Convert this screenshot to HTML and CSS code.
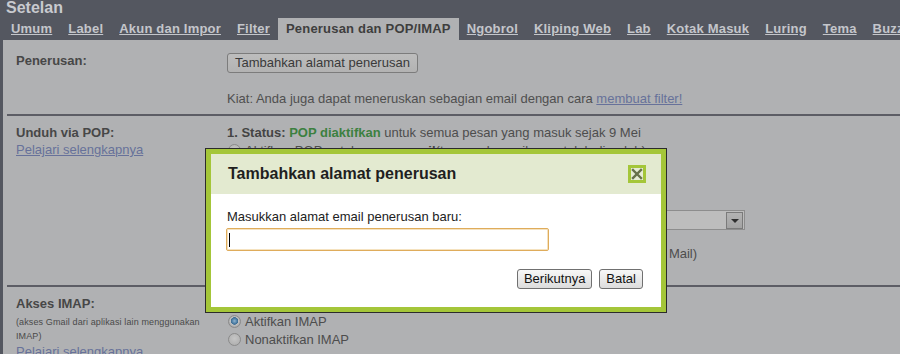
FILE: index.html
```html
<!DOCTYPE html>
<html lang="id">
<head>
<meta charset="utf-8">
<title>Setelan</title>
<link rel="stylesheet" href="styles.css">
</head>
<body>
<div class="page">
  <header class="top">
    <h1 class="title">Setelan</h1>
    <nav class="tabs">
      <a class="tab">Umum</a>
      <a class="tab">Label</a>
      <a class="tab">Akun dan Impor</a>
      <a class="tab">Filter</a>
      <span class="tab active">Penerusan dan POP/IMAP</span>
      <a class="tab">Ngobrol</a>
      <a class="tab">Kliping Web</a>
      <a class="tab">Lab</a>
      <a class="tab">Kotak Masuk</a>
      <a class="tab">Luring</a>
      <a class="tab">Tema</a>
      <a class="tab">Buzz</a>
    </nav>
  </header>

  <main class="panel">
    <section class="row fwd">
      <div class="lbl"><b>Penerusan:</b></div>
      <div class="val">
        <button class="btn-dim">Tambahkan alamat penerusan</button>
        <p class="tip">Kiat: Anda juga dapat meneruskan sebagian email dengan cara <a class="link">membuat filter!</a></p>
      </div>
    </section>

    <section class="row pop">
      <div class="lbl">
        <b class="lbl-title">Unduh via POP:</b>
        <a class="link lbl-link">Pelajari selengkapnya</a>
      </div>
      <div class="val">
        <div class="status"><b>1. Status:</b> <b class="ok">POP diaktifkan</b> untuk semua pesan yang masuk sejak 9 Mei</div>
        <div class="radio-line"><span class="radio"></span>Aktifkan POP untuk <b>semua email</b> (termasuk email yang telah diunduh)</div>
        <div class="radio-line"><span class="radio checked"></span>Aktifkan POP hanya untuk <b>email yang masuk mulai sekarang</b></div>
        <div class="radio-line"><span class="radio"></span>Nonaktifkan POP</div>
        <div class="select-line"><b>2. Saat pesan diakses dengan POP</b>
          <span class="select"><span class="select-text">simpan salinan Gmail</span><span class="arrow"></span></span>
        </div>
        <div class="step3"><b>3. Konfigurasikan klien email Anda</b> (mis. Outlook, Eudora, Netscape Mail)</div>
        <div class="plain"><a class="link">Petunjuk Konfigurasi</a></div>
      </div>
    </section>

    <section class="row imap">
      <div class="lbl">
        <b class="lbl-title">Akses IMAP:</b>
        <p class="small">(akses Gmail dari aplikasi lain menggunakan IMAP)</p>
        <a class="link lbl-link">Pelajari selengkapnya</a>
      </div>
      <div class="val">
        <div class="status"><b>1. Status:</b> <b class="ok">IMAP diaktifkan</b></div>
        <div class="radio-line"><span class="radio checked"></span>Aktifkan IMAP</div>
        <div class="radio-line"><span class="radio"></span>Nonaktifkan IMAP</div>
      </div>
    </section>
  </main>

  <div class="dialog" role="dialog">
    <div class="dialog-in">
      <div class="dlg-head">
        <span class="dlg-title">Tambahkan alamat penerusan</span>
        <span class="close">
          <svg width="12" height="12" viewBox="0 0 12 12"><path d="M2 2 L10 10 M10 2 L2 10" stroke="#67714a" stroke-width="2.4" stroke-linecap="square" fill="none"/></svg>
        </span>
      </div>
      <div class="dlg-body">
        <div class="dlg-label">Masukkan alamat email penerusan baru:</div>
        <div class="field"><span class="caret"></span></div>
        <div class="dlg-actions">
          <button class="btn">Berikutnya</button>
          <button class="btn">Batal</button>
        </div>
      </div>
    </div>
  </div>
</div>
</body>
</html>
```

FILE: styles.css
```css
* { box-sizing: border-box; }

html, body {
  margin: 0;
  padding: 0;
}

body {
  width: 900px;
  height: 354px;
  overflow: hidden;
  background: #545760;
  font-family: "Liberation Sans", Arial, sans-serif;
  font-size: 13px;
  color: #4d4d4d;
}

.page {
  position: relative;
  width: 900px;
  height: 354px;
}

/* header */
.top {
  height: 40px;
}

.title {
  margin: 0;
  height: 18px;
  padding-left: 6px;
  font-size: 16px;
  line-height: 15px;
  font-weight: bold;
  color: #c8cacf;
}

.tabs {
  display: flex;
  height: 22px;
  padding-left: 3px;
  white-space: nowrap;
}

.tab {
  padding: 0 8px;
  line-height: 22px;
  font-size: 13px;
  font-weight: bold;
  letter-spacing: 0.2px;
  color: #c4c6cb;
  text-decoration: underline;
}

.tab.active {
  background: #b0b1b3;
  color: #3e3e3e;
  text-decoration: none;
}

/* panel */
.panel {
  margin-left: 3px;
  padding-left: 4px;
  background: #b0b1b3;
  height: 314px;
}

.row {
  display: grid;
  grid-template-columns: 220px 1fr;
  border-bottom: 2px solid #5c5d65;
}

.lbl {
  padding-left: 9px;
  color: #474747;
}

.lbl b {
  display: block;
}

.link {
  color: #67719a;
  text-decoration: underline;
}

.fwd {
  padding: 13px 0 7px;
}

.fwd .lbl {
  line-height: 16px;
}

.btn-dim {
  display: block;
  height: 20px;
  margin: 0;
  padding: 0 7px;
  border: 1px solid #7c7c7c;
  border-radius: 3px;
  background: linear-gradient(#bdbdbd, #b3b3b3);
  font-family: "Liberation Sans", Arial, sans-serif;
  font-size: 13px;
  color: #3a3a3a;
  line-height: 18px;
}

.tip {
  margin: 18px 0 0;
  line-height: 16px;
  color: #4f4f4f;
  white-space: nowrap;
}

.pop {
  padding: 8px 0 4px;
}

.lbl-title {
  line-height: 17px;
}

.lbl-link {
  display: block;
  line-height: 17px;
}

.val {
  white-space: nowrap;
  color: #4d4d4d;
}

.val b {
  color: #444;
}

.val b.ok {
  color: #3c8040;
}

.status {
  line-height: 17px;
}

.radio-line {
  display: flex;
  align-items: center;
  height: 18px;
  padding-left: 1px;
}

.radio {
  width: 13px;
  height: 13px;
  margin-right: 4px;
  border-radius: 50%;
  border: 1px solid #8a8a8a;
  background: radial-gradient(circle at 50% 40%, #c6c6c6, #aaaaaa);
  flex: none;
}

.radio.checked {
  background: radial-gradient(circle at 50% 45%, #8fb3cf 0, #4e7fa6 2.5px, #3f6c91 3.5px, #c2c2c2 4px, #a8a8a8 6px);
}

.select-line {
  display: flex;
  align-items: center;
  width: 518px;
  height: 24px;
  margin-top: 13px;
}

.select {
  margin-left: auto;
  display: flex;
  align-items: center;
  justify-content: space-between;
  width: 250px;
  height: 20px;
  padding: 0 3px 0 4px;
  border: 1px solid #8d8d8d;
  background: #bdbdbd;
}

.select-text {
  color: #444;
}

.arrow {
  position: relative;
  width: 17px;
  height: 17px;
  margin-right: -2px;
  border: 1px solid #7a7a7a;
  background: linear-gradient(#b3b3b3, #a3a3a3);
}

.arrow::after {
  content: "";
  position: absolute;
  left: 4px;
  top: 6px;
  border-left: 4px solid transparent;
  border-right: 4px solid transparent;
  border-top: 4px solid #2e2e2e;
}

.step3 {
  margin-top: 13px;
  line-height: 18px;
  padding-left: 32px;
}

.plain {
  line-height: 18px;
}

.imap {
  padding-top: 8px;
  border-bottom: none;
}

.small {
  margin: 3px 0 0;
  width: 205px;
  font-size: 9px;
  letter-spacing: 0.12px;
  line-height: 14px;
  color: #4a4a4a;
}

/* dialog */
.dialog {
  position: absolute;
  left: 205px;
  top: 148px;
  width: 462px;
  height: 165px;
  border: 1px solid #2b2b2b;
}

.dialog-in {
  height: 100%;
  border: 5px solid #a4c639;
  background: #fff;
  display: flex;
  flex-direction: column;
}

.dlg-head {
  height: 40px;
  flex: none;
  display: flex;
  align-items: center;
  justify-content: space-between;
  padding: 0 15px 0 17px;
  background: #e3ead0;
}

.dlg-title {
  font-size: 16px;
  font-weight: bold;
  color: #1f1f1f;
}

.close {
  display: flex;
  align-items: center;
  justify-content: center;
  width: 18px;
  height: 18px;
  border: 3px solid #a4c639;
  background: #e6ecd4;
}

.close svg {
  display: block;
}

.dlg-body {
  flex: 1;
  padding: 15px 18px 0 16px;
  color: #222;
}

.dlg-label {
  line-height: 16px;
}

.field {
  display: flex;
  align-items: center;
  width: 323px;
  height: 23px;
  margin: 3px 0 0 -1px;
  padding-left: 2px;
  border: 1px solid #dfac5b;
  border-radius: 2px;
  box-shadow: inset 0 0 0 1px #f5e2bf;
  background: #fff;
}

.caret {
  width: 1px;
  height: 14px;
  background: #000;
}

.dlg-actions {
  display: flex;
  justify-content: flex-end;
  gap: 7px;
  margin-top: 18px;
}

.btn {
  height: 20px;
  margin: 0;
  padding: 0 6px;
  border: 1px solid #707070;
  border-radius: 3px;
  background: linear-gradient(#f7f7f7, #dcdcdc);
  font-family: "Liberation Sans", Arial, sans-serif;
  font-size: 13px;
  line-height: 18px;
  color: #111;
}
```
